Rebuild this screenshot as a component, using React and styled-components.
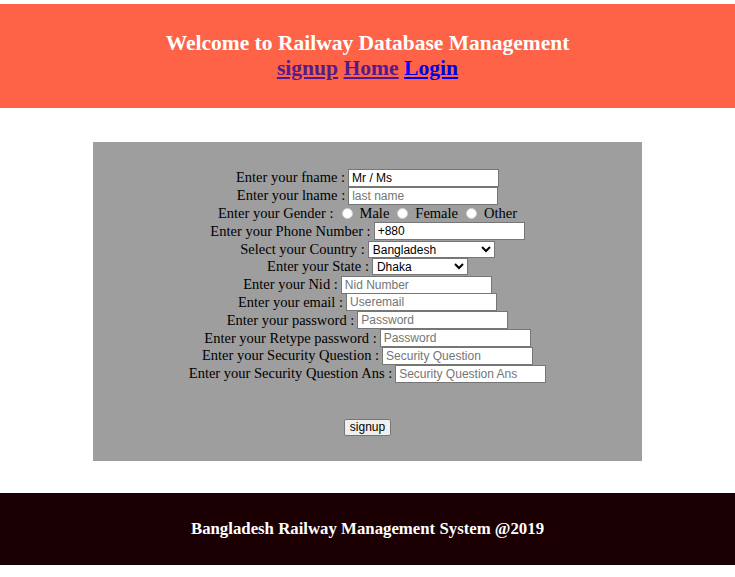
import React from 'react'
import styled, { createGlobalStyle } from 'styled-components'

const GlobalStyle = createGlobalStyle`
  body {
    margin: 0;
    padding-top: 4px;
    font-family: "Liberation Serif", "Times New Roman", serif;
    background: #ffffff;
  }
`

const Header = styled.header`
  background-color: #ff6347;
  height: 104px;
  box-sizing: border-box;
  padding-top: 27px;
  text-align: center;
  color: #ffffff;
`

const Title = styled.div`
  font-size: 21.5px;
  font-weight: bold;
  line-height: 24px;
`

const NavLinks = styled.div`
  font-size: 21.6px;
  font-weight: bold;
  line-height: 26px;
`

const NavLink = styled.a`
  color: ${p => (p.$visited ? '#551a8b' : '#0000ee')};
  text-decoration: underline;
`

const Main = styled.main`
  padding: 34px 0 32px;
  display: flex;
  justify-content: center;
`

const FormBox = styled.form`
  width: 549px;
  height: 319px;
  box-sizing: border-box;
  background-color: #9e9e9e;
  padding-top: 27px;
  display: flex;
  flex-direction: column;
  align-items: center;
  font-size: 14.5px;
  color: #000;
`

const Row = styled.div`
  display: flex;
  align-items: center;
  justify-content: center;
  height: 17.8px;
  white-space: pre;
`

const Field = styled.input`
  width: ${p => p.$w || 151}px;
  height: 18px;
  box-sizing: border-box;
  border: 1px solid #767676;
  padding: 1px 3px;
  font-family: "Liberation Sans", Arial, sans-serif;
  font-size: 12px;
  color: #000;
  background: #fff;
  margin: 0 0 0 3px;
  &::placeholder { color: #757575; }
`

const Select = styled.select`
  width: ${p => p.$w}px;
  height: 17px;
  box-sizing: border-box;
  border: 1px solid #767676;
  font-family: "Liberation Sans", Arial, sans-serif;
  font-size: 12px;
  background: #fff;
  margin-left: 3px;
  border-radius: 0;
`

const Radio = styled.input`
  width: 11px;
  height: 11px;
  margin: 0 7px 0 8px;
  appearance: none;
  border-radius: 50%;
  background: #ffffff;
  border: 1px solid #cfcfcf;
`

const Gap = styled.div`
  height: 36px;
`

const Button = styled.button`
  font-family: "Liberation Sans", Arial, sans-serif;
  font-size: 12px;
  height: 17px;
  padding: 0 5px;
  border: 1px solid #767676;
  border-radius: 2px;
  background: #efefef;
  color: #000;
`

const Footer = styled.footer`
  background-color: #1a0002;
  height: 72px;
  display: flex;
  align-items: center;
  justify-content: center;
  color: #ffffff;
  font-size: 16.8px;
  font-weight: bold;
`

const fields = [
  { label: 'Enter your fname', value: 'Mr / Ms' },
  { label: 'Enter your lname', placeholder: 'last name', w: 150 },
]

const fields2 = [
  { label: 'Enter your Nid', placeholder: 'Nid Number' },
  { label: 'Enter your email', placeholder: 'Useremail' },
  { label: 'Enter your password', placeholder: 'Password' },
  { label: 'Enter your Retype password', placeholder: 'Password' },
  { label: 'Enter your Security Question', placeholder: 'Security Question' },
  { label: 'Enter your Security Question Ans', placeholder: 'Security Question Ans' },
]

export default function App() {
  return (
    <>
      <GlobalStyle />
      <Header>
        <Title>Welcome to Railway Database Management</Title>
        <NavLinks>
          <NavLink href="#signup" $visited>signup</NavLink>{' '}
          <NavLink href="#home" $visited>Home</NavLink>{' '}
          <NavLink href="#login">Login</NavLink>
        </NavLinks>
      </Header>
      <Main>
        <FormBox onSubmit={e => e.preventDefault()}>
          {fields.map(f => (
            <Row key={f.label}>
              {f.label} :<Field $w={f.w} defaultValue={f.value} placeholder={f.placeholder} />
            </Row>
          ))}
          <Row>
            Enter your Gender :<Radio type="radio" name="g" />Male<Radio type="radio" name="g" />Female<Radio type="radio" name="g" />Other
          </Row>
          <Row>
            Enter your Phone Number :<Field defaultValue="+880" />
          </Row>
          <Row>
            Select your Country :
            <Select $w={127}><option>Bangladesh</option></Select>
          </Row>
          <Row>
            Enter your State :
            <Select $w={96}><option>Dhaka</option></Select>
          </Row>
          {fields2.map(f => (
            <Row key={f.label + f.placeholder}>
              {f.label} :<Field placeholder={f.placeholder} />
            </Row>
          ))}
          <Gap />
          <Button type="submit">signup</Button>
        </FormBox>
      </Main>
      <Footer>Bangladesh Railway Management System @2019</Footer>
    </>
  )
}
